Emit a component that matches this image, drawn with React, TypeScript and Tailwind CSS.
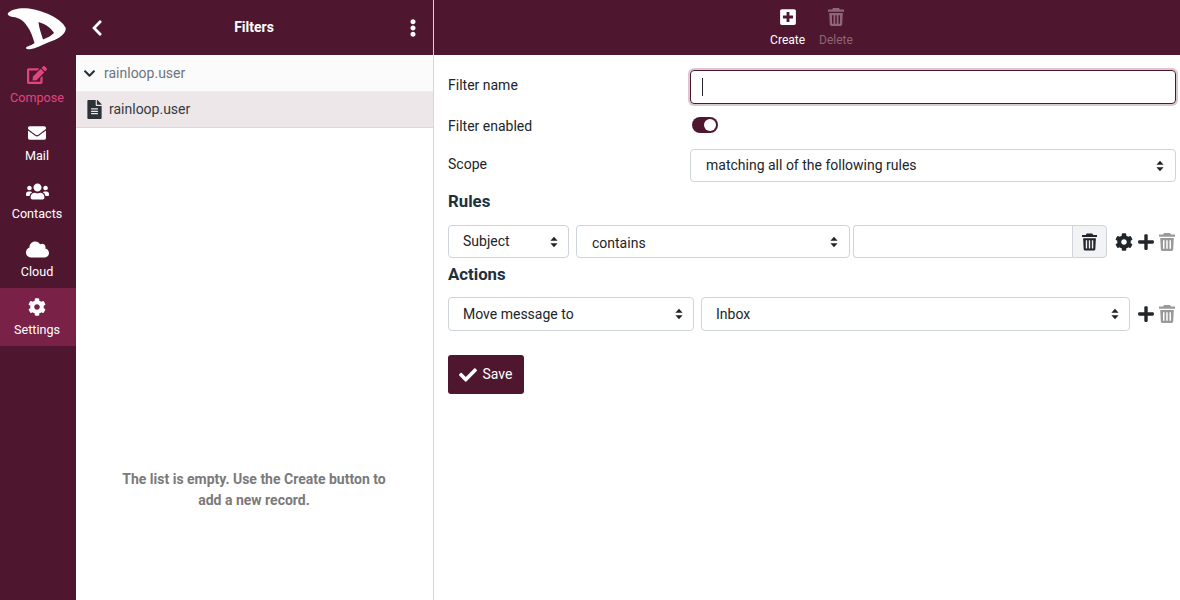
import { ReactNode } from 'react';
import {
  FaCheck,
  FaChevronDown,
  FaChevronLeft,
  FaCloud,
  FaCog,
  FaEdit,
  FaEllipsisV,
  FaEnvelope,
  FaFileAlt,
  FaPlus,
  FaPlusSquare,
  FaUsers,
} from 'react-icons/fa';

function Logo() {
  return (
    <svg width="76" height="56" viewBox="0 0 76 56" className="block">
      <path
        fill="#fff"
        fillRule="evenodd"
        d="M8 13C12 9 20 7.500 29 8.500C43 10.500 61 18 65.800 28C66 35 57 39.500 48 42.500C42 45 36 48.500 30 49.200C26 49.500 25 48 27 46.800C30 45.500 33 44.500 34.500 43C33 38 31 31 27 26C24 21 19 17.500 13 17C9.500 16.500 7 15 8 13ZM38.500 22C46 24 52 29 54 33C50 37 46 38 43 39.500C41 33 39 28 38.500 22Z"
      />
    </svg>
  );
}

function Trash({ className }: { className: string }) {
  return (
    <svg viewBox="0 0 16 18" className={`fill-current shrink-0 ${className}`}>
      <path
        fillRule="evenodd"
        d="M5 0H11L12 1.500H16V3.700H0V1.500H4ZM1.200 5H14.800L14.200 16.600A1.500 1.500 0 0 1 12.700 18H3.300A1.500 1.500 0 0 1 1.800 16.600ZM4 7.200V15.800H5.500V7.200ZM7.250 7.200V15.800H8.750V7.200ZM10.500 7.200V15.800H12V7.200Z"
      />
    </svg>
  );
}

function NavItem({ icon, label, active, accent }: { icon: ReactNode; label: string; active?: boolean; accent?: boolean }) {
  return (
    <div
      className={`h-[58px] flex flex-col items-center pt-[8px] pr-[2px] text-[12.6px] leading-[16px] ${
        active ? 'bg-[#7a2148]' : ''
      } ${accent ? 'text-[#e0457f]' : 'text-white'}`}
    >
      <div className="h-[22px] flex items-center">{icon}</div>
      <span className="mt-[4px]">{label}</span>
    </div>
  );
}

function Sort() {
  return (
    <svg width="8" height="12" viewBox="0 0 8 12" className="shrink-0 fill-[#212529]">
      <path d="M4 .8 7.600 4.800H.4ZM4 11.200 .4 7.200H7.600Z" />
    </svg>
  );
}

function Select({ value, className, textClass, arrowClass }: { value: string; className: string; textClass?: string; arrowClass?: string }) {
  return (
    <div className={`relative ${className}`}>
      <select
        defaultValue={value}
        className={`w-full h-full appearance-none bg-white border border-[#ced4da] rounded-[4px] pl-[14px] text-[14px] text-[#212529] ${textClass ?? ''}`}
      >
        <option>{value}</option>
      </select>
      <div className={`absolute top-0 bottom-0 flex items-center pointer-events-none ${arrowClass ?? 'right-[11px]'}`}>
        <Sort />
      </div>
    </div>
  );
}

function FormRow({ label, className, labelClass, children }: { label: string; className: string; labelClass?: string; children: ReactNode }) {
  return (
    <div className={`flex items-center ${className}`}>
      <label className={`w-[242px] shrink-0 text-[14px] text-[#212529] ${labelClass ?? ''}`}>{label}</label>
      {children}
    </div>
  );
}

export default function App() {
  return (
    <div className="w-[1180px] h-[600px] flex overflow-hidden bg-white font-['Roboto',sans-serif] text-[#212529]">
      <aside className="w-[76px] shrink-0 bg-[#4f162f]">
        <Logo />
        <NavItem icon={<FaEdit className="text-[20px]" />} label="Compose" accent />
        <NavItem icon={<FaEnvelope className="text-[18px]" />} label="Mail" />
        <NavItem icon={<FaUsers className="text-[23px]" />} label="Contacts" />
        <NavItem icon={<FaCloud className="text-[23px]" />} label="Cloud" />
        <NavItem icon={<FaCog className="text-[18px]" />} label="Settings" active />
      </aside>

      <section className="w-[358px] shrink-0 flex flex-col border-r border-[#d6d6d6]">
        <header className="h-[55px] shrink-0 bg-[#4f162f] text-white flex items-center justify-between pl-[12px] pr-[11px]">
          <FaChevronLeft className="text-[18px]" />
          <h1 className="text-[14px] font-bold mr-[2px]">Filters</h1>
          <FaEllipsisV className="text-[18px]" />
        </header>
        <div className="h-[37px] bg-[#fbfbfb] border-b border-[#eeeeee] flex items-center pl-[7px] text-[14px] text-[#6c757d]">
          <FaChevronDown className="text-[13px] text-[#212f3d] mr-[8px]" />
          <span>rainloop.user</span>
        </div>
        <div className="h-[36px] bg-[#ede7e9] border-b border-[#d9d9d9] flex items-center pl-[9px] text-[14px] text-[#343a40]">
          <FaFileAlt className="text-[19px] text-[#2b3238] mr-[5px]" />
          <span>rainloop.user</span>
        </div>
        <div className="flex-1 flex items-center justify-center pt-[252px] pr-[41px] pl-[40px] text-center text-[14px] leading-[21px] font-bold text-[#7a7a7a]">
          <p>
            The list is empty. Use the Create button to
            <br />
            add a new record.
          </p>
        </div>
      </section>

      <main className="flex-1 min-w-0 flex flex-col">
        <div className="h-[55px] shrink-0 bg-[#4f162f] flex justify-center items-start pt-[8px] pl-[9px] text-[12px] leading-[16px] gap-[14px]">
          <div className="flex flex-col items-center text-white">
            <FaPlusSquare className="text-[18px] h-[18px] mb-[6px]" />
            <span>Create</span>
          </div>
          <div className="flex flex-col items-center text-[#8d6677]">
            <Trash className="w-[16px] h-[18px] mb-[6px]" />
            <span>Delete</span>
          </div>
        </div>

        <div className="pl-[14px] pr-[4px] pt-[15px]">
          <FormRow label="Filter name" className="h-[34px]" labelClass="pb-[4px]">
            <div className="relative flex-1">
              <input
                className="block w-full h-[34px] rounded-[4px] border border-[#4f162f] outline-none shadow-[0_0_0_2px_#dcc6d0]"
                readOnly
              />
              <span className="absolute left-[12px] top-[8px] w-px h-[18px] bg-[#212529]" />
            </div>
          </FormRow>

          <FormRow label="Filter enabled" className="h-[16px] mt-[13px]" labelClass="pt-[2px]">
            <div className="ml-[2px] w-[26px] h-[16px] rounded-full bg-[#4f162f] flex items-center justify-end pr-[2px]">
              <span className="w-[12px] h-[12px] rounded-full bg-white" />
            </div>
          </FormRow>

          <FormRow label="Scope" className="h-[33px] mt-[16px]" labelClass="pb-[2px]">
            <Select value="matching all of the following rules" className="flex-1 h-[33px]" textClass="pl-[15px]" arrowClass="right-[12px]" />
          </FormRow>

          <h2 className="text-[16.8px] leading-[20px] font-bold mt-[9px] text-[#212f3d]">Rules</h2>
          <div className="flex items-center h-[33px] mt-[14px]">
            <Select value="Subject" className="w-[121px] h-full" />
            <Select value="contains" className="w-[274px] h-full ml-[7px]" textClass="pl-[15px] pt-[3px]" arrowClass="right-[12px]" />
            <div className="w-[254px] h-full ml-[3px] flex">
              <input
                className="flex-1 min-w-0 border border-r-0 border-[#ced4da] rounded-l-[4px] outline-none"
                readOnly
              />
              <div className="w-[35px] bg-[#f1f3f5] border border-[#ced4da] rounded-r-[4px] flex items-center justify-center">
                <Trash className="w-[15px] h-[18px] text-[#212529]" />
              </div>
            </div>
            <FaCog className="text-[18px] text-[#212529] ml-[8px]" />
            <FaPlus className="text-[18px] text-[#212529] ml-[4px]" />
            <Trash className="w-[16px] h-[18px] text-[#999999] ml-[4px]" />
          </div>

          <h2 className="text-[16.8px] leading-[20px] font-bold mt-[6px] text-[#212f3d]">Actions</h2>
          <div className="flex items-center h-[34px] mt-[13px]">
            <Select value="Move message to" className="w-[246px] h-full" />
            <Select value="Inbox" className="w-[429px] h-full ml-[7px]" />
            <FaPlus className="text-[18px] text-[#212529] ml-[7px]" />
            <Trash className="w-[16px] h-[18px] text-[#999999] ml-[4px]" />
          </div>

          <button className="mt-[24px] w-[76px] h-[39px] bg-[#4f162f] text-white rounded-[3px] flex items-center justify-center gap-[6px] pr-[1px] text-[14px]">
            <FaCheck className="text-[18px]" />
            Save
          </button>
        </div>
      </main>
    </div>
  );
}
